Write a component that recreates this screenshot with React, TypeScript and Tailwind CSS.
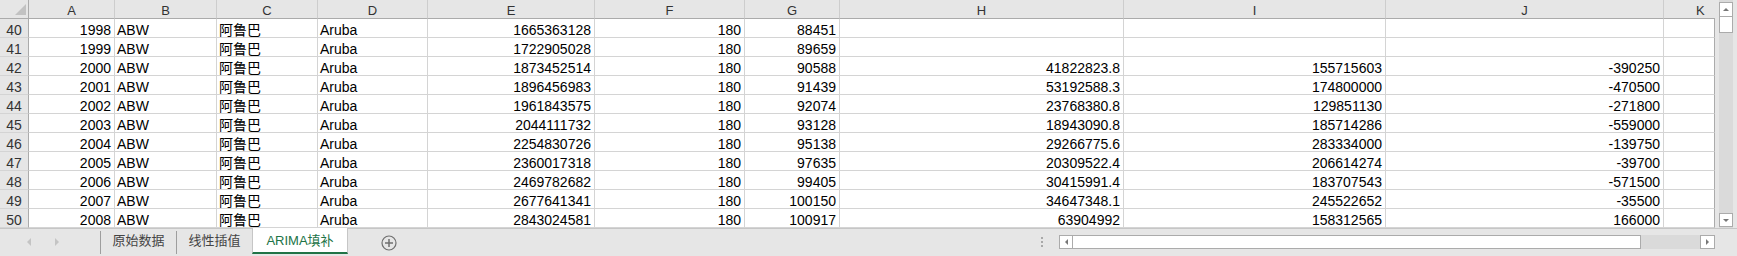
import React from 'react'

const FONT = "font-[family-name:'Liberation_Sans','Noto_Sans_CJK_SC',sans-serif]"

type Row = {
  n: number
  year: string
  e: string
  g: string
  h?: string
  i?: string
  j?: string
}

const ROWS: Row[] = [
  { n: 40, year: '1998', e: '1665363128', g: '88451' },
  { n: 41, year: '1999', e: '1722905028', g: '89659' },
  { n: 42, year: '2000', e: '1873452514', g: '90588', h: '41822823.8', i: '155715603', j: '-390250' },
  { n: 43, year: '2001', e: '1896456983', g: '91439', h: '53192588.3', i: '174800000', j: '-470500' },
  { n: 44, year: '2002', e: '1961843575', g: '92074', h: '23768380.8', i: '129851130', j: '-271800' },
  { n: 45, year: '2003', e: '2044111732', g: '93128', h: '18943090.8', i: '185714286', j: '-559000' },
  { n: 46, year: '2004', e: '2254830726', g: '95138', h: '29266775.6', i: '283334000', j: '-139750' },
  { n: 47, year: '2005', e: '2360017318', g: '97635', h: '20309522.4', i: '206614274', j: '-39700' },
  { n: 48, year: '2006', e: '2469782682', g: '99405', h: '30415991.4', i: '183707543', j: '-571500' },
  { n: 49, year: '2007', e: '2677641341', g: '100150', h: '34647348.1', i: '245522652', j: '-35500' },
  { n: 50, year: '2008', e: '2843024581', g: '100917', h: '63904992', i: '158312565', j: '166000' },
]

const LETTERS = ['A', 'B', 'C', 'D', 'E', 'F', 'G', 'H', 'I', 'J']

function Cell({ v, right }: { v?: string; right?: boolean }) {
  return (
    <div
      className={`h-[19px] overflow-hidden whitespace-nowrap border-r border-b border-[#d4d4d4] text-[14px] leading-[22px] text-black ${
        right ? 'text-right pr-[3px]' : 'pl-[2px]'
      }`}
    >
      {v}
    </div>
  )
}

function Corner() {
  return (
    <div className="h-[19px] bg-[#e6e6e6] border-r border-b border-r-[#ababab] border-b-[#ababab]">
      <svg width="28" height="18" viewBox="0 0 28 18">
        <polygon points="15,15 26,15 26,4" fill="#c2c2c2" />
      </svg>
    </div>
  )
}

function Tri({ dir, color, w = 4, h = 7 }: { dir: 'l' | 'r' | 'u' | 'd'; color: string; w?: number; h?: number }) {
  const pts =
    dir === 'l' ? `${w},0 ${w},${h} 0,${h / 2}` :
    dir === 'r' ? `0,0 0,${h} ${w},${h / 2}` :
    dir === 'u' ? `0,${h} ${w},${h} ${w / 2},0` :
                  `0,0 ${w},0 ${w / 2},${h}`
  return (
    <svg width={w} height={h} viewBox={`0 0 ${w} ${h}`}>
      <polygon points={pts} fill={color} />
    </svg>
  )
}

function VScroll() {
  return (
    <div className="w-[22px] h-[228px] bg-[#e6e6e6] pl-[4px] flex">
      <div className="w-[14px] h-full bg-[#dadada] flex flex-col">
        <div className="mt-[2px] h-[15px] bg-white border border-[#ababab] flex items-center justify-center">
          <Tri dir="u" color="#777" w={6} h={3} />
        </div>
        <div className="-mt-px h-[17px] bg-white border border-[#ababab]" />
        <div className="flex-1" />
        <div className="mb-[1px] h-[14px] bg-white border border-[#ababab] flex items-center justify-center">
          <Tri dir="d" color="#777" w={6} h={3} />
        </div>
      </div>
    </div>
  )
}

function TabBar() {
  return (
    <div className="h-[28px] border-t border-[#c6c6c6] flex items-start text-[13px]">
      {/* sheet nav arrows */}
      <div className="w-[100px] h-[27px] flex items-center pl-[27px] gap-[24px] pb-[2px]">
        <Tri dir="l" color="#c4c4c4" w={4} h={8} />
        <Tri dir="r" color="#c4c4c4" w={4} h={8} />
      </div>
      <div className="mt-[2px] w-px h-[23px] bg-[#9e9e9e]" />
      <div className="w-[75px] h-[24px] leading-[24px] text-center text-[#444]">原始数据</div>
      <div className="mt-[2px] w-px h-[23px] bg-[#9e9e9e]" />
      <div className="w-[75px] h-[24px] leading-[24px] text-center text-[#444]">线性插值</div>
      <div className="-mt-px w-[96px] h-[26px] bg-white border-l border-r border-[#c6c6c6] border-b-2 border-b-[#217346] leading-[25px] text-center text-[#217346]">
        ARIMA填补
      </div>
      {/* new sheet */}
      <div className="ml-[33px] mt-[6px]">
        <svg width="16" height="16" viewBox="0 0 16 16">
          <circle cx="8" cy="8" r="7" fill="none" stroke="#6f6f6f" strokeWidth="1.2" />
          <line x1="4" y1="8" x2="12" y2="8" stroke="#6f6f6f" strokeWidth="1.5" />
          <line x1="8" y1="4" x2="8" y2="12" stroke="#6f6f6f" strokeWidth="1.5" />
        </svg>
      </div>
      <div className="flex-1" />
      {/* splitter dots */}
      <div className="mt-[8px] w-[3px] flex flex-col items-center gap-[2px] mr-[16px]">
        <span className="w-[2px] h-[2px] bg-[#a8a8a8]" />
        <span className="w-[2px] h-[2px] bg-[#a8a8a8]" />
        <span className="w-[2px] h-[2px] bg-[#a8a8a8]" />
      </div>
      {/* horizontal scrollbar */}
      <div className="mt-[6px] w-[656px] h-[14px] bg-[#dadada] flex">
        <div className="w-[14px] h-full bg-white border border-[#ababab] flex items-center justify-center">
          <Tri dir="l" color="#777" w={3} h={6} />
        </div>
        <div className="-ml-px w-[569px] h-full bg-white border border-[#ababab]" />
        <div className="flex-1" />
        <div className="w-[15px] h-full bg-white border border-[#ababab] flex items-center justify-center">
          <Tri dir="r" color="#777" w={3} h={6} />
        </div>
      </div>
      <div className="w-[22px]" />
    </div>
  )
}

export default function App() {
  return (
    <div className={`w-[1737px] h-[256px] overflow-hidden bg-[#e6e6e6] ${FONT}`}>
      <div className="flex h-[228px]">
        <div className="w-[1715px] h-[228px] overflow-hidden bg-white grid grid-cols-[29px_86px_102px_101px_110px_167px_150px_95px_284px_262px_278px_51px] content-start">
          {/* Column headers */}
          <Corner />
          {LETTERS.map((l) => (
            <div
              key={l}
              className="h-[19px] bg-[#e6e6e6] border-r border-b border-r-[#cdcdcd] border-b-[#ababab] text-center text-[13px] leading-[21px] text-[#333] overflow-hidden"
            >
              {l}
            </div>
          ))}
          <div className="h-[19px] bg-[#e6e6e6] border-b border-b-[#ababab] pl-[32px] text-[13px] leading-[21px] text-[#333] overflow-hidden">
            K
          </div>

          {/* Data rows */}
          {ROWS.map((r) => (
            <React.Fragment key={r.n}>
              <div className="h-[19px] bg-[#e6e6e6] border-r border-b border-r-[#ababab] border-b-[#d4d4d4] text-center text-[14px] leading-[22px] text-[#333] overflow-hidden">
                {r.n}
              </div>
              <Cell v={r.year} right />
              <Cell v="ABW" />
              <Cell v="阿鲁巴" />
              <Cell v="Aruba" />
              <Cell v={r.e} right />
              <Cell v="180" right />
              <Cell v={r.g} right />
              <Cell v={r.h} right />
              <Cell v={r.i} right />
              <Cell v={r.j} right />
              <div className="h-[19px] border-r border-b border-r-[#ababab] border-b-[#d4d4d4]" />
            </React.Fragment>
          ))}
        </div>
        <VScroll />
      </div>
      <TabBar />
    </div>
  )
}
